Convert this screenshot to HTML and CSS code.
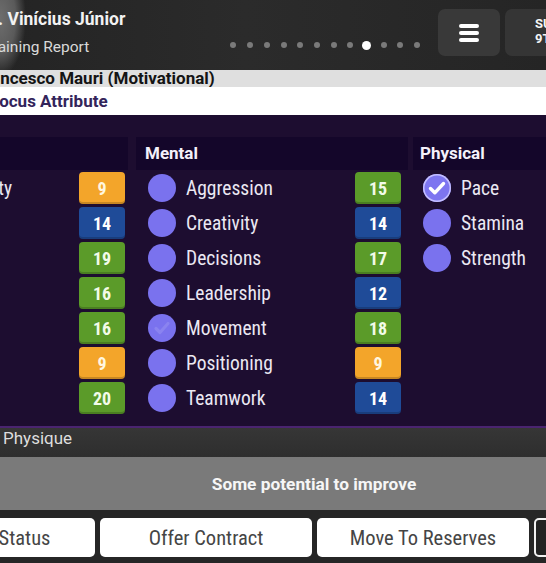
FILE: index.html
```html
<!DOCTYPE html>
<html lang="en">
<head>
<meta charset="utf-8">
<title>Training Report</title>
<link rel="stylesheet" href="styles.css">
</head>
<body>
<div class="page">
  <header class="topbar">
    <div class="who">
      <div class="name">7. Vinícius Júnior</div>
      <div class="sub">Training Report</div>
    </div>
    <div class="dots">
      <span class="dot"></span><span class="dot"></span><span class="dot"></span><span class="dot"></span>
      <span class="dot"></span><span class="dot"></span><span class="dot"></span><span class="dot"></span>
      <span class="dot active"></span><span class="dot"></span><span class="dot"></span><span class="dot"></span>
    </div>
    <div class="menu-btn">
      <span class="bar"></span><span class="bar"></span><span class="bar"></span>
    </div>
    <div class="date-btn">
      <span>SUN</span><span>9TH</span>
    </div>
  </header>

  <div class="coach"><span class="coach-text">Francesco Mauri (Motivational)</span></div>
  <div class="focus"><span class="focus-text">Focus Attribute</span></div>

  <main class="attrs">
    <section class="col col-left">
      <div class="col-head"></div>
      <div class="rows">
        <div class="row"><span class="cut-label">Agility</span><span class="val orange">9</span></div>
        <div class="row"><span class="val blue">14</span></div>
        <div class="row"><span class="val green">19</span></div>
        <div class="row"><span class="val green">16</span></div>
        <div class="row"><span class="val green">16</span></div>
        <div class="row"><span class="val orange">9</span></div>
        <div class="row"><span class="val green">20</span></div>
      </div>
    </section>

    <section class="col col-mental">
      <div class="col-head">Mental</div>
      <div class="rows">
        <div class="row"><span class="radio"></span><span class="label">Aggression</span><span class="val green">15</span></div>
        <div class="row"><span class="radio"></span><span class="label">Creativity</span><span class="val blue">14</span></div>
        <div class="row"><span class="radio"></span><span class="label">Decisions</span><span class="val green">17</span></div>
        <div class="row"><span class="radio"></span><span class="label">Leadership</span><span class="val blue">12</span></div>
        <div class="row">
          <span class="radio">
            <svg viewBox="0 0 28 28" width="28" height="28"><path d="M8 14.5l4 4 8-9" fill="none" stroke="rgba(255,255,255,0.12)" stroke-width="3.2" stroke-linecap="round" stroke-linejoin="round"/></svg>
          </span><span class="label">Movement</span><span class="val green">18</span></div>
        <div class="row"><span class="radio"></span><span class="label">Positioning</span><span class="val orange">9</span></div>
        <div class="row"><span class="radio"></span><span class="label">Teamwork</span><span class="val blue">14</span></div>
      </div>
    </section>

    <section class="col col-physical">
      <div class="col-head">Physical</div>
      <div class="rows">
        <div class="row">
          <span class="radio checked">
            <svg viewBox="0 0 28 28" width="28" height="28"><path d="M7.5 14.5l4.3 4.3 8.7-9.3" fill="none" stroke="#ffffff" stroke-width="3.4" stroke-linecap="round" stroke-linejoin="round"/></svg>
          </span><span class="label">Pace</span></div>
        <div class="row"><span class="radio"></span><span class="label">Stamina</span></div>
        <div class="row"><span class="radio"></span><span class="label">Strength</span></div>
      </div>
    </section>
  </main>

  <div class="physique"><span>Physique</span></div>
  <div class="potential">Some potential to improve</div>

  <footer class="actions">
    <div class="btn btn-status">Status</div>
    <div class="btn">Offer Contract</div>
    <div class="btn">Move To Reserves</div>
    <div class="btn btn-dark"></div>
  </footer>
</div>
</body>
</html>
```

FILE: styles.css
```css
* { box-sizing: border-box; }

html, body {
  margin: 0;
  padding: 0;
  background: #1d0d30;
}

body {
  width: 546px;
  height: 563px;
  overflow: hidden;
  font-family: Roboto, "Liberation Sans", sans-serif;
}

.page {
  width: 546px;
  height: 563px;
  overflow: hidden;
  display: flex;
  flex-direction: column;
}

/* ---------- top bar ---------- */
.topbar {
  height: 70px;
  flex: none;
  display: flex;
  align-items: flex-start;
  background:
    radial-gradient(ellipse 26px 58px at 0 18px, #6e6e6e 0%, #5a5a5a 60%, rgba(60,60,60,0) 100%),
    linear-gradient(90deg, #242424 0%, #2b2b2b 45%, #252525 100%);
  overflow: hidden;
}

.who {
  flex: 1;
  min-width: 0;
  padding-top: 8px;
}

.name {
  margin-left: -12px;
  font-size: 17.5px;
  line-height: 22px;
  font-weight: 700;
  color: #f2f2f2;
  white-space: nowrap;
}

.sub {
  margin-top: 7px;
  margin-left: -16px;
  font-size: 15.5px;
  line-height: 20px;
  color: #d9d9d9;
  white-space: nowrap;
}

.dots {
  display: flex;
  align-items: center;
  gap: 10.7px;
  height: 10px;
  margin-top: 40px;
  margin-right: 18px;
}

.dot {
  width: 6px;
  height: 6px;
  border-radius: 50%;
  background: #7a7a7a;
}

.dot.active {
  width: 9px;
  height: 9px;
  margin: 0 -1.5px;
  background: #ffffff;
}

.menu-btn {
  margin-top: 9px;
  width: 62px;
  height: 47px;
  flex: none;
  border-radius: 7px;
  background: #393939;
  display: flex;
  flex-direction: column;
  align-items: center;
  justify-content: center;
  gap: 3px;
}

.bar {
  width: 20px;
  height: 4px;
  border-radius: 2px;
  background: #ffffff;
}

.date-btn {
  margin-top: 9px;
  margin-left: 5px;
  margin-right: -19px;
  width: 60px;
  height: 47px;
  flex: none;
  border-radius: 7px;
  background: #353535;
  display: flex;
  flex-direction: column;
  padding: 7px 0 0 30px;
  color: #f4f4f4;
  font-size: 13px;
  line-height: 15px;
  font-weight: 700;
}

/* ---------- coach / focus bands ---------- */
.coach {
  height: 17px;
  flex: none;
  background: #dfdfdf;
  overflow: hidden;
}

.coach-text {
  display: block;
  margin-left: -24px;
  font-size: 17px;
  line-height: 17px;
  font-weight: 700;
  color: #141414;
  white-space: nowrap;
}

.focus {
  height: 28px;
  flex: none;
  background: #ffffff;
  display: flex;
  align-items: center;
  overflow: hidden;
}

.focus-text {
  margin-left: -10px;
  font-size: 17px;
  font-weight: 700;
  color: #33245a;
  white-space: nowrap;
}

/* ---------- attributes ---------- */
.attrs {
  height: 313px;
  flex: none;
  display: flex;
  padding-top: 22px;
  background: #1d0d30;
  border-bottom: 2px solid #4a2470;
}

.col {
  display: flex;
  flex-direction: column;
}

.col-left { width: 128px; }
.col-mental { width: 272px; margin-left: 8px; }
.col-physical { flex: 1; margin-left: 5px; }

.col-head {
  height: 33px;
  background: #14062a;
  color: #f4f1fa;
  font-size: 17px;
  font-weight: 700;
  line-height: 33px;
  white-space: nowrap;
}

.col-mental .col-head { padding-left: 9px; }
.col-physical .col-head { padding-left: 7px; }

.rows {
  margin-top: 2px;
  display: flex;
  flex-direction: column;
  gap: 3px;
}

.row {
  height: 32px;
  display: flex;
  align-items: center;
}

.col-left .row {
  justify-content: flex-end;
  padding-right: 3px;
}

.cut-label {
  margin-right: auto;
  margin-left: -36px;
  font-family: "Liberation Sans Narrow", "Roboto Condensed", "DejaVu Sans Condensed", Roboto, sans-serif;
  font-size: 19.5px;
  color: #e9e6f1;
  white-space: nowrap;
}

.col-mental .row { padding: 0 7px 0 12px; }
.col-physical .row { padding-left: 10px; }

.radio {
  width: 28px;
  height: 28px;
  flex: none;
  border-radius: 50%;
  background: #7a72ee;
  display: flex;
  align-items: center;
  justify-content: center;
}

.radio svg { display: block; }

.radio.checked {
  background: #7d75f0;
  box-shadow: inset 0 0 0 1.5px #c4bfff;
}

.label {
  flex: 1;
  margin-left: 10px;
  font-family: "Liberation Sans Narrow", "Roboto Condensed", "DejaVu Sans Condensed", Roboto, sans-serif;
  font-size: 19.5px;
  color: #ebe8f3;
  white-space: nowrap;
}

.val {
  width: 46px;
  height: 32px;
  flex: none;
  border-radius: 4px;
  display: flex;
  align-items: center;
  justify-content: center;
  font-family: "Liberation Sans Narrow", "Roboto Condensed", Roboto, sans-serif;
  font-size: 18px;
  font-weight: 700;
  color: #ffffff;
  box-shadow: inset 0 -2px 0 rgba(0,0,0,0.18);
}

.val.orange { background: #f3a52a; color: #fff6df; }
.val.blue { background: #1f4b98; }
.val.green { background: #5b9b29; color: #f2fbe8; }

/* ---------- bottom bands ---------- */
.physique {
  height: 29px;
  flex: none;
  background: linear-gradient(180deg, #363636 0%, #2e2e2e 100%);
  padding-left: 3px;
  font-size: 17px;
  line-height: 20px;
  color: #dedede;
  overflow: hidden;
}

.potential {
  height: 53px;
  flex: none;
  background: #7a7a7a;
  padding-left: 82px;
  display: flex;
  align-items: center;
  justify-content: center;
  font-size: 17.3px;
  font-weight: 700;
  color: #f6f6f6;
  white-space: nowrap;
}

.actions {
  flex: 1;
  background: #262626;
  display: flex;
  gap: 5px;
  padding-top: 8px;
}

.btn {
  width: 212px;
  height: 39px;
  flex: none;
  border-radius: 5px;
  background: #ffffff;
  display: flex;
  align-items: center;
  justify-content: center;
  font-family: "Liberation Sans Narrow", "Roboto Condensed", Roboto, sans-serif;
  font-size: 20.5px;
  color: #454545;
  white-space: nowrap;
}

.btn-status {
  width: 141px;
  margin-left: -46px;
}

.btn-dark {
  width: 40px;
  background: #232323;
  border: 2px solid #f2f2f2;
}
```
